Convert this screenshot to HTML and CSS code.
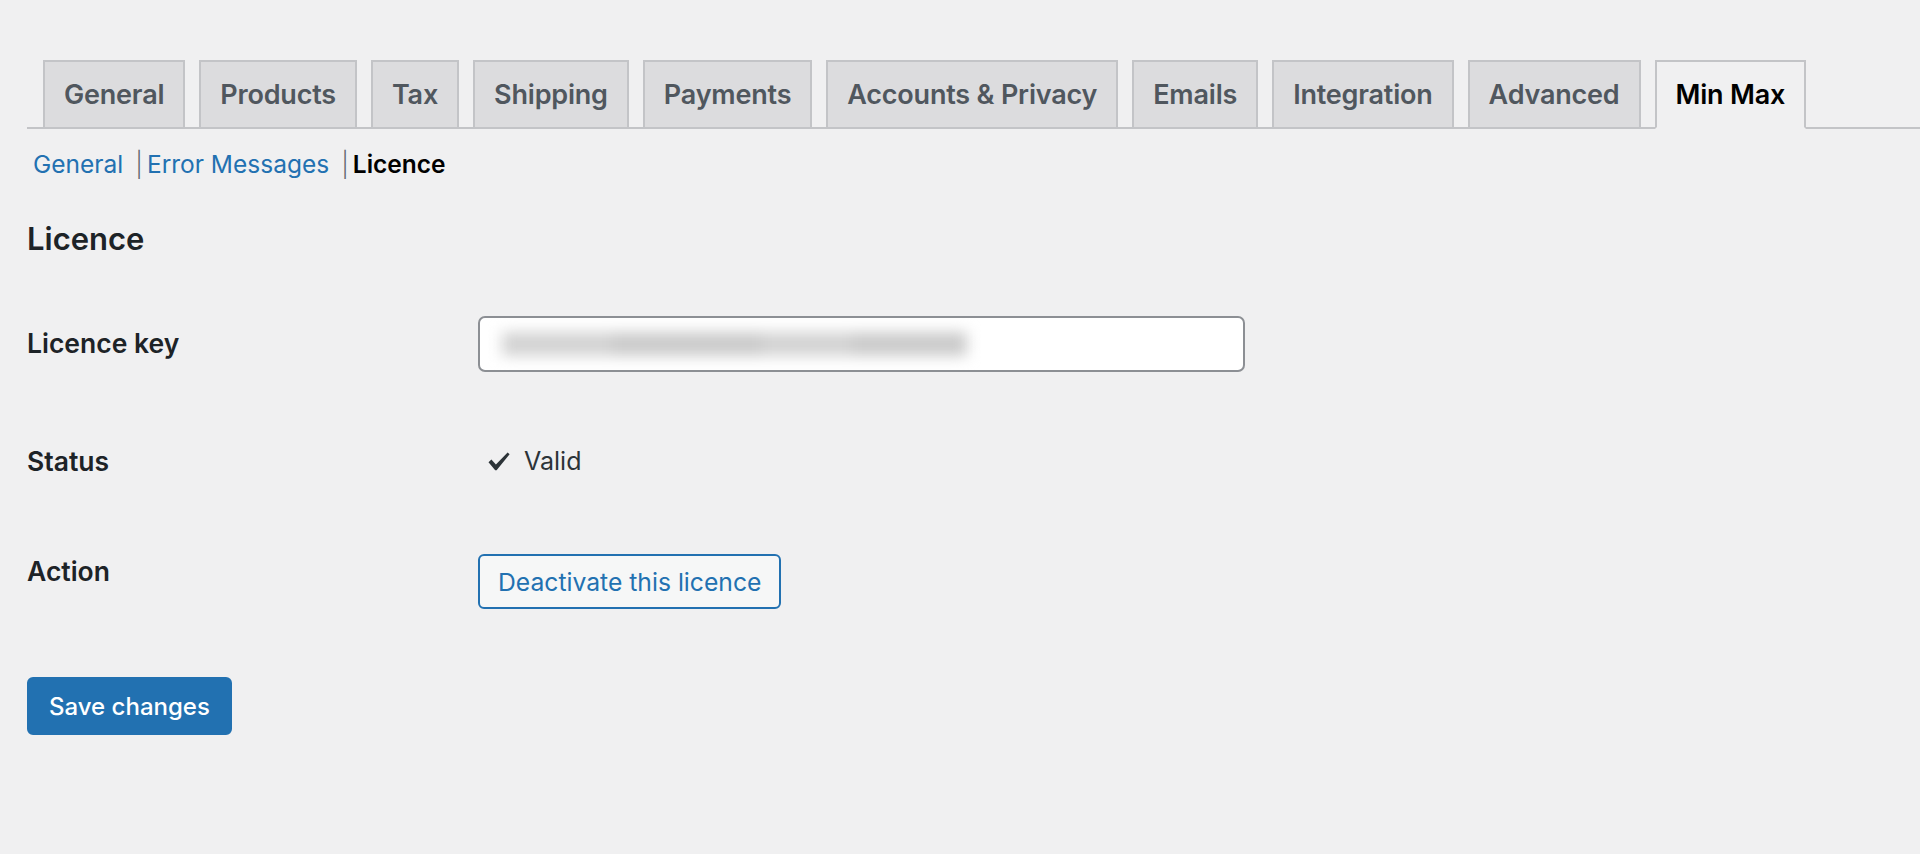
FILE: index.html
```html
<!DOCTYPE html>
<html lang="en">
<head>
    <meta charset="UTF-8">
    <meta name="viewport" content="width=device-width, initial-scale=1.0">
    <title>Min Max Settings</title>
    <link rel="stylesheet" href="styles.css">
</head>
<body>
    <div class="wrap">
        <nav class="nav-tabs">
            <a class="nav-tab" href="#">General</a>
            <a class="nav-tab" href="#">Products</a>
            <a class="nav-tab" href="#">Tax</a>
            <a class="nav-tab" href="#">Shipping</a>
            <a class="nav-tab" href="#">Payments</a>
            <a class="nav-tab" href="#">Accounts &amp; Privacy</a>
            <a class="nav-tab" href="#">Emails</a>
            <a class="nav-tab" href="#">Integration</a>
            <a class="nav-tab" href="#">Advanced</a>
            <a class="nav-tab active" href="#">Min Max</a>
        </nav>

        <ul class="subsubsub">
            <li><a href="#">General</a></li>
            <li><span class="sep">|</span><a href="#">Error Messages</a></li>
            <li><span class="sep">|</span><span class="current">Licence</span></li>
        </ul>

        <h2 class="section-title">Licence</h2>

        <div class="form-table">
            <div class="form-row">
                <div class="form-label">Licence key</div>
                <div class="form-field">
                    <div class="text-input">
                        <!-- key is hidden -->
                        <span class="blur-key">
                            <span class="blob" style="width: 110px"></span>
                            <span class="blob dark" style="width: 150px"></span>
                            <span class="blob" style="width: 90px"></span>
                            <span class="blob dark" style="width: 115px"></span>
                        </span>
                    </div>
                </div>
            </div>
            <div class="form-row">
                <div class="form-label">Status</div>
                <div class="form-field status">
                    <svg class="check" viewBox="0 0 22 19" width="22" height="19">
                        <path d="M0.5 10.2 L3.4 7.6 L7.9 12.6 L19.6 0.4 L21.6 2.2 L8.6 18.2 L7.2 18.2 Z" fill="#2c3338"/>
                    </svg>
                    <span>Valid</span>
                </div>
            </div>
            <div class="form-row">
                <div class="form-label">Action</div>
                <div class="form-field action">
                    <button class="button" type="button">Deactivate this licence</button>
                </div>
            </div>
        </div>

        <button class="button-primary" type="submit">Save changes</button>
    </div>
</body>
</html>
```

FILE: styles.css
```css
body {
    margin: 0;
    background: #f0f0f1;
    font-family: Inter, "Noto Sans", sans-serif;
    color: #1d2327;
}
.wrap {
    padding: 60px 0 0 27px;
}
.nav-tabs {
    display: flex;
    align-items: flex-end;
    gap: 14px;
    padding-left: 16px;
    border-bottom: 2px solid #c3c4c7;
}
.nav-tab {
    display: block;
    padding: 9px 19px;
    border: 2px solid #c3c4c7;
    border-bottom: none;
    background: #dcdcde;
    color: #50575e;
    font-size: 27px;
    font-weight: 600;
    line-height: 47px;
    text-decoration: none;
    letter-spacing: -0.2px;
}
.nav-tab.active {
    background: #f0f0f1;
    color: #000;
    border-bottom: 2px solid #f0f0f1;
    margin-bottom: -2px;
}
.subsubsub {
    list-style: none;
    display: flex;
    margin: 18px 0 0 6px;
    padding: 0;
    font-size: 24.5px;
    line-height: 34px;
}
.subsubsub a {
    color: #2271b1;
    text-decoration: none;
}
.subsubsub .sep {
    color: #646970;
    font-weight: 300;
    margin: 0 4px 0 12px;
}
.subsubsub .current {
    color: #000;
    font-weight: 600;
}
.section-title {
    margin: 39px 0 0;
    font-size: 31px;
    font-weight: 600;
    line-height: 38px;
    color: #1d2327;
}
.form-table {
    margin-top: 29px;
}
.form-row {
    display: grid;
    grid-template-columns: 451px 767px;
    align-items: start;
    padding: 31px 0;
}
.form-row:first-child {
    padding-top: 29px;
}
.form-row:last-child {
    padding-top: 35px;
}
.form-label {
    padding-top: 10px;
    font-size: 26.5px;
    font-weight: 600;
    line-height: 34px;
}
.text-input {
    height: 52px;
    border: 2px solid #8c8f94;
    border-radius: 7px;
    background: #fff;
    display: flex;
    align-items: center;
    padding: 0 22px;
    overflow: hidden;
}
.blur-key {
    display: flex;
    filter: blur(7px);
}
.blob {
    display: block;
    height: 24px;
    background: #d3d3d3;
}
.blob.dark {
    background: #cbcbcb;
}
.status {
    display: flex;
    align-items: center;
    gap: 14px;
    padding: 10px 0 0 10px;
    font-size: 25px;
    line-height: 34px;
    color: #2c3338;
}
.action {
    padding-top: 10px;
}
.button {
    height: 55px;
    padding: 0 18px;
    border: 2px solid #2271b1;
    border-radius: 6px;
    background: #f6f7f7;
    color: #2271b1;
    font-family: inherit;
    font-size: 24.7px;
    cursor: pointer;
}
.button-primary {
    margin-top: 37px;
    height: 58px;
    padding: 0 20px;
    border: 2px solid #2271b1;
    border-radius: 6px;
    background: #2271b1;
    color: #fff;
    font-family: inherit;
    font-size: 24px;
    font-weight: 500;
    cursor: pointer;
}
```
